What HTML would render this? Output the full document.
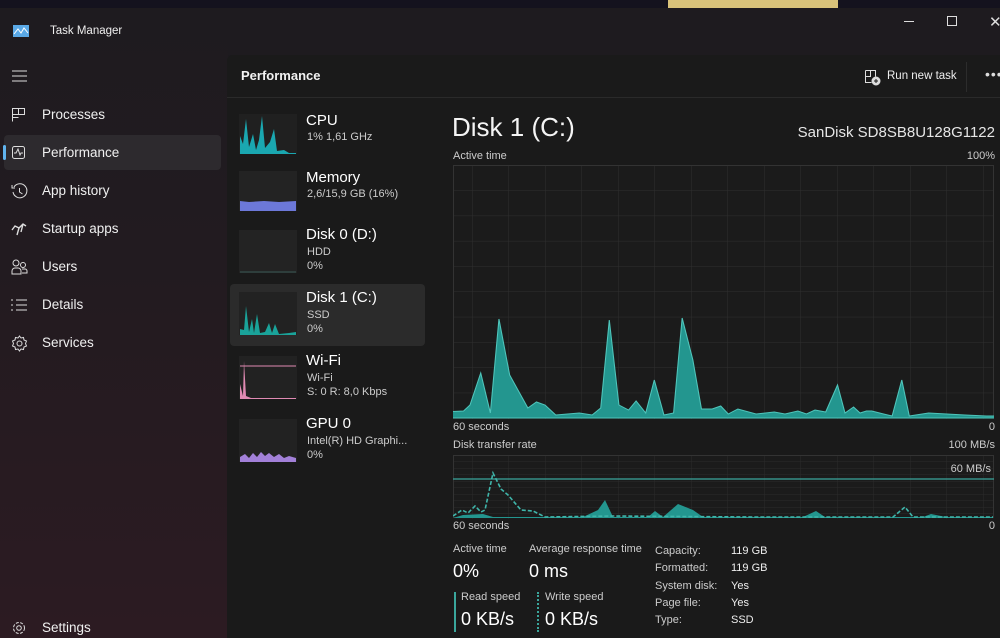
<!DOCTYPE html>
<html><head><meta charset="utf-8"><style>
*{margin:0;padding:0;box-sizing:border-box}
body{width:1000px;height:638px;overflow:hidden;background:#1c1a1e;font-family:"Segoe UI","Liberation Sans",sans-serif;color:#fff;position:relative}
.a{position:absolute;white-space:nowrap}
.side{position:absolute;left:0;top:8px;width:228px;height:630px;background:linear-gradient(#1e1b1f 0%,#221b20 40%,#2c1b22 100%)}
.nav{position:absolute;left:42px;font-size:13.5px;color:#f0f0f0}
.ic{position:absolute;left:11px}
.main{position:absolute;left:227px;top:55px;width:773px;height:583px;background:#1a1a1a;border-top-left-radius:6px}
.s{font-size:11px;color:#ccc}
</style></head><body>
<div class="a" style="left:0;top:0;width:1000px;height:8px;background:#14121e"></div>
<div class="a" style="left:668px;top:0;width:170px;height:8px;background:#d9c27a"></div>
<div class="a" style="left:0;top:8px;width:1000px;height:47px;background:#1e1b1f"></div>
<div class="side"></div>
<svg class="a" style="left:13px;top:25px" width="16" height="12"><rect width="16" height="12" fill="#5aa9e6"/><path d="M1 9 L5 4 L8 8 L11 3 L15 8" stroke="#fff" fill="none"/></svg>
<div class="a" style="left:50px;top:25px;font-size:11.5px;color:#eee">Task Manager</div>
<div class="a" style="left:904px;top:21px;width:10px;height:1px;background:#ddd"></div>
<div class="a" style="left:947px;top:16px;width:10px;height:10px;border:1px solid #ddd"></div>
<div class="a" style="left:989px;top:13px;font-size:15px;color:#ddd">✕</div>
<svg class="a" style="left:12px;top:70px" width="16" height="12" stroke="#ddd"><path d="M0 1H15M0 6H15M0 11H15"/></svg>
<svg class="ic a" style="top:107px" width="16" height="16" fill="none" stroke="#ddd"><path d="M1.5 1.5h12v6h-12zM1.5 1.5v13M7.5 1.5v6M1.5 10.5h6"/></svg>
<div class="nav" style="top:107px">Processes</div>
<div class="a" style="left:4px;top:135px;width:217px;height:35px;background:#2d2a2e;border-radius:4px"></div>
<div class="a" style="left:3px;top:145px;width:3px;height:15px;background:#60b4ee;border-radius:2px"></div>
<svg class="ic a" style="top:145px" width="16" height="16" fill="none" stroke="#ddd"><rect x="1.5" y="1.5" width="12" height="12" rx="2"/><path d="M3 8h2l2-4 2 6 1-2h2"/></svg>
<div class="nav" style="top:145px">Performance</div>
<svg class="ic a" style="top:183px" width="17" height="17" fill="none" stroke="#ddd"><path d="M3 4A7 7 0 1 1 2 9M1 2v3h3M8.5 5v4l3 2"/></svg>
<div class="nav" style="top:183px">App history</div>
<svg class="ic a" style="top:222px" width="17" height="14" fill="none" stroke="#ddd" stroke-width="1.4"><path d="M1 8L4 4 8 6 12 2 15 4M8 6L6 13M12 2L10 10"/></svg>
<div class="nav" style="top:221px">Startup apps</div>
<svg class="ic a" style="top:259px" width="17" height="17" fill="none" stroke="#ddd"><circle cx="5" cy="4" r="3"/><circle cx="12" cy="6" r="2.5"/><path d="M1 15v-3a3 3 0 0 1 3-3h3a3 3 0 0 1 3 3v3zM11 10h3a2 2 0 0 1 2 2v2h-5"/></svg>
<div class="nav" style="top:259px">Users</div>
<svg class="ic a" style="top:299px" width="16" height="12" fill="none" stroke="#ddd"><path d="M0 1h2M5 1h11M0 6h2M5 6h11M0 11h2M5 11h11"/></svg>
<div class="nav" style="top:297px">Details</div>
<svg class="ic a" style="top:335px" width="17" height="17" fill="none" stroke="#ddd"><path d="M8.5 1l1.5 2 2.5-.5.5 2.5 2.5 1-1 2.5 1 2.5-2.5 1-.5 2.5-2.5-.5-1.5 2-1.5-2-2.5.5-.5-2.5-2.5-1 1-2.5-1-2.5 2.5-1 .5-2.5 2.5.5z"/><circle cx="8.5" cy="8.5" r="2.5"/></svg>
<div class="nav" style="top:335px">Services</div>
<svg class="ic a" style="top:620px" width="16" height="16" fill="none" stroke="#ddd"><circle cx="8" cy="8" r="2.3"/><circle cx="8" cy="8" r="5.5" stroke-dasharray="3 1.5"/></svg>
<div class="nav" style="top:620px">Settings</div>

<div class="main"></div>
<div class="a" style="left:227px;top:97px;width:773px;height:1px;background:#2a2a2a"></div>
<div class="a" style="left:241px;top:68px;font-size:13px;font-weight:bold;color:#f2f2f2">Performance</div>
<svg class="a" style="left:864px;top:69px" width="17" height="17" fill="none" stroke="#ddd"><path d="M1.5 1.5h10v6M1.5 1.5v12h6M6.5 1.5v6h-5"/><circle cx="12" cy="12" r="4" fill="#ddd"/><path d="M12 10v4M10 12h4" stroke="#1a1a1a"/></svg>
<div class="a" style="left:887px;top:70px;font-size:11.5px;color:#eee">Run new task</div>
<div class="a" style="left:966px;top:62px;width:1px;height:30px;background:#2c2c2c"></div>
<div class="a" style="left:985px;top:66px;font-size:14px;color:#ddd;letter-spacing:1px">•••</div>

<div class="a" style="left:230px;top:284px;width:195px;height:62px;background:#2b2b2b;border-radius:4px"></div>
<svg class="a" style="left:239px;top:114px" width="58" height="350">
<rect x="0" y="0" width="58" height="40" fill="#202020"/>
<path d="M1 40V22L4 30 7 5 10 33 14 20 17 36 20 26 23 2 26 34 31 28 35 15 38 37 45 36 50 39 57 39V40z" fill="#1aa7b0"/>
<rect x="0" y="57" width="58" height="40" fill="#232323"/>
<path d="M1 97V87L10 88 25 87 40 88 57 87V97z" fill="#6c78d8"/>
<rect x="0" y="116" width="58" height="43" fill="#232323"/><path d="M1 158H57" stroke="#3a5a55"/>
<rect x="0" y="178" width="58" height="43" fill="#222"/>
<path d="M1 221V215L5 216 7 192 10 218 13 205 15 219 18 200 21 219 26 218 30 209 33 219 36 210 40 220 50 219 57 218V221z" fill="#1aa39a"/>
<rect x="0" y="242" width="58" height="43" fill="#222"/><path d="M1 252H57" stroke="#e08ab3"/>
<path d="M1 285V270L4 282 5 247 7 282 12 284 57 284V285z" fill="#e08ab3"/>
<rect x="0" y="305" width="58" height="43" fill="#222"/>
<path d="M1 348V343L6 340 10 344 14 339 18 343 22 338 26 342 30 339 35 343 40 340 45 344 50 342 57 344V348z" fill="#a280d8"/>
</svg>
<div class="a" style="left:306px;top:112px;font-size:15px">CPU</div><div class="a s" style="left:307px;top:131px">1% 1,61 GHz</div>
<div class="a" style="left:306px;top:169px;font-size:15px">Memory</div><div class="a s" style="left:307px;top:188px">2,6/15,9 GB (16%)</div>
<div class="a" style="left:306px;top:226px;font-size:15px">Disk 0 (D:)</div><div class="a s" style="left:307px;top:246px">HDD</div><div class="a s" style="left:307px;top:260px">0%</div>
<div class="a" style="left:306px;top:289px;font-size:15px">Disk 1 (C:)</div><div class="a s" style="left:307px;top:309px">SSD</div><div class="a s" style="left:307px;top:323px">0%</div>
<div class="a" style="left:306px;top:352px;font-size:15px">Wi-Fi</div><div class="a s" style="left:307px;top:372px">Wi-Fi</div><div class="a s" style="left:307px;top:386px">S: 0 R: 8,0 Kbps</div>
<div class="a" style="left:306px;top:415px;font-size:15px">GPU 0</div><div class="a s" style="left:307px;top:435px">Intel(R) HD Graphi...</div><div class="a s" style="left:307px;top:449px">0%</div>

<div class="a" style="left:452px;top:112px;font-size:26px;color:#f4f4f4">Disk 1 (C:)</div>
<div class="a" style="right:5px;top:124px;font-size:15px;color:#e6e6e6">SanDisk SD8SB8U128G1122</div>
<div class="a s" style="left:453px;top:150px">Active time</div><div class="a s" style="right:5px;top:150px">100%</div>
<svg class="a" style="left:453px;top:165px" width="541" height="254">
<defs><pattern id="g" x="19" y="0" width="36.5" height="25.3" patternUnits="userSpaceOnUse"><path d="M0 0V26M0 0H37" stroke="#2f2f2f" fill="none"/></pattern></defs>
<rect width="541" height="254" fill="#1b1b1b"/><rect width="541" height="254" fill="url(#g)"/>
<rect x=".5" y=".5" width="540" height="252" fill="none" stroke="#333"/>
<path transform="translate(-484.4 -165) scale(1.0714 1)" d="M440 418L440 412 462 411 468 405 478 373 487 413 495 319 505 375 522 408 530 402 538 405 548 415 570 413 582 415 590 408 598 320 607 405 616 410 623 401 632 413 640 380 649 415 658 413 666 318 676 360 684 409 694 409 702 406 709 414 718 409 735 414 752 412 762 414 774 411 782 414 790 410 800 412 811 385 818 413 826 407 832 413 838 411 843 411 854 414 862 416 871 380 878 416 896 413 930 415 950 416 993 416 993 418z" fill="#23968f" stroke="#4fc5bb"/>
</svg>
<div class="a s" style="left:453px;top:421px">60 seconds</div><div class="a s" style="right:5px;top:421px">0</div>
<div class="a s" style="left:453px;top:439px">Disk transfer rate</div><div class="a s" style="right:5px;top:439px">100 MB/s</div>
<svg class="a" style="left:453px;top:455px" width="541" height="64">
<defs><pattern id="h" x="19" y="0" width="36.5" height="6.5" patternUnits="userSpaceOnUse"><path d="M0 0V7M0 0H37" stroke="#2b2b2b" fill="none"/></pattern></defs>
<rect width="541" height="64" fill="#1b1b1b"/><rect width="541" height="64" fill="url(#h)"/>
<rect x=".5" y=".5" width="540" height="62" fill="none" stroke="#333"/>
<path d="M0 24H541" stroke="#3aa69c" stroke-width="1.3"/>
<path d="M0 63L10 60 30 59 40 62 130 62 145 55 152 45 160 62 195 62 202 56 210 62 225 49 240 55 250 62 350 62 363 56 372 62 470 62 478 59 493 62 540 62V63z" fill="#23968f"/>
<path d="M0 61L9 55 15 58 22 51 28 57 32 55 40 18 48 34 55 40 68 55 80 56 92 62 160 61 300 62 440 62 452 52 460 62 540 62" fill="none" stroke="#3fb5aa" stroke-width="1.6" stroke-dasharray="4 2"/>
</svg>
<div class="a s" style="right:9px;top:463px">60 MB/s</div>
<div class="a s" style="left:453px;top:520px">60 seconds</div><div class="a s" style="right:5px;top:520px">0</div>
<div class="a s" style="left:453px;top:543px">Active time</div>
<div class="a s" style="left:529px;top:543px">Average response time</div>
<div class="a" style="left:453px;top:561px;font-size:18px">0%</div>
<div class="a" style="left:529px;top:561px;font-size:18px">0 ms</div>
<div class="a" style="left:454px;top:592px;width:2px;height:40px;background:#3aa69c"></div>
<div class="a" style="left:537px;top:592px;width:0;height:40px;border-left:2px dotted #3aa69c"></div>
<div class="a s" style="left:461px;top:591px">Read speed</div><div class="a s" style="left:545px;top:591px">Write speed</div>
<div class="a" style="left:461px;top:609px;font-size:18px">0 KB/s</div><div class="a" style="left:545px;top:609px;font-size:18px">0 KB/s</div>
<div class="a s" style="left:655px;top:543px;line-height:17.3px">Capacity:<br>Formatted:<br>System disk:<br>Page file:<br>Type:</div>
<div class="a s" style="left:731px;top:543px;line-height:17.3px;color:#eee">119 GB<br>119 GB<br>Yes<br>Yes<br>SSD</div>
</body></html>
